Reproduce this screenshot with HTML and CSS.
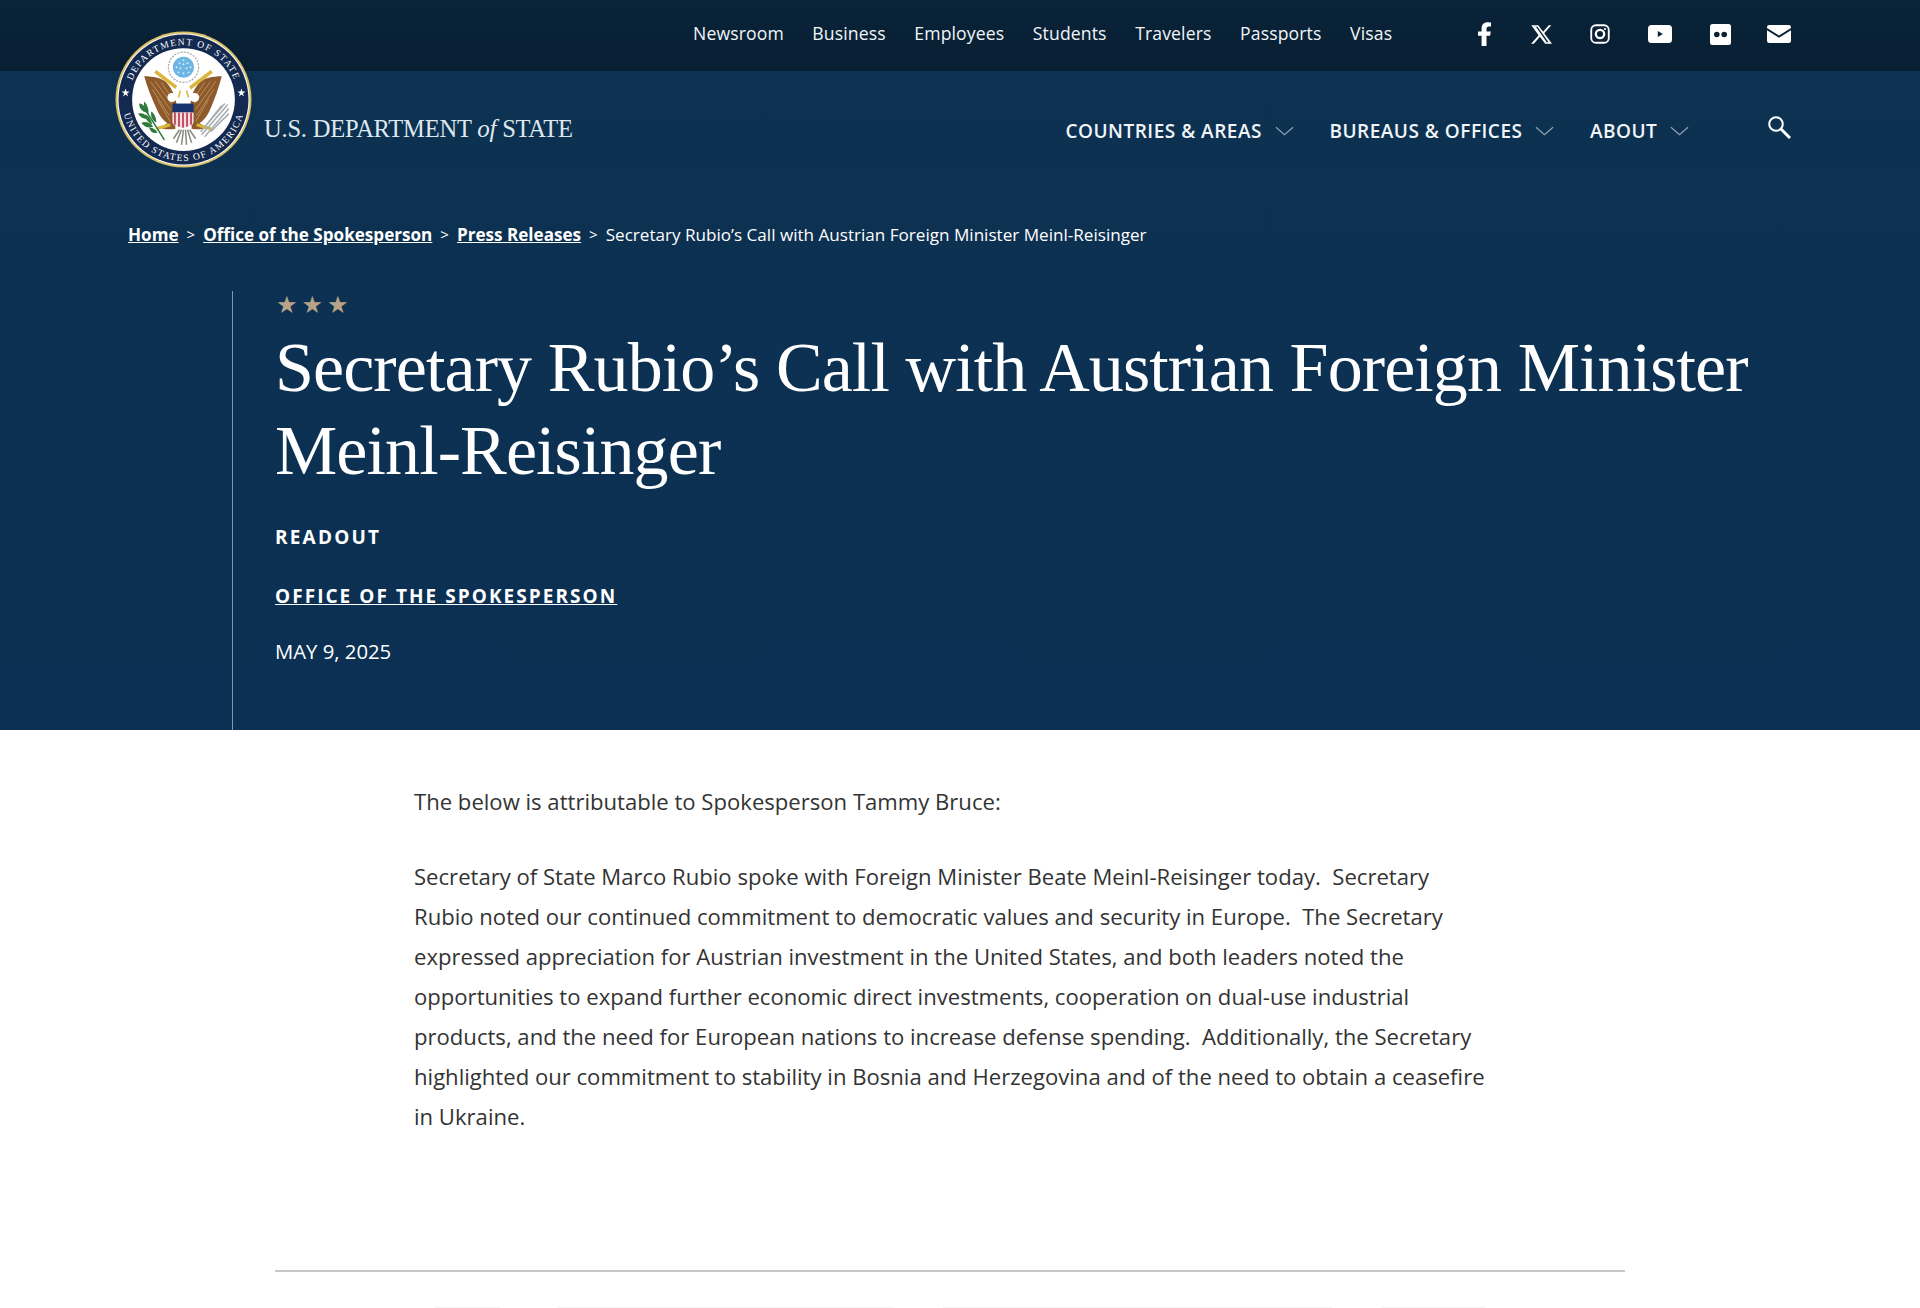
FILE: index.html
```html
<!DOCTYPE html>
<html lang="en">
<head>
<meta charset="utf-8">
<title>Secretary Rubio's Call with Austrian Foreign Minister Meinl-Reisinger</title>
<link rel="stylesheet" href="styles.css">
</head>
<body>
<header class="hero">
  <div class="topbar">
    <nav class="toplinks">
      <a>Newsroom</a><a>Business</a><a>Employees</a><a>Students</a><a>Travelers</a><a>Passports</a><a>Visas</a>
    </nav>
    <div class="socials">
      <svg class="si si-f" viewBox="0 0 14 24"><path d="M3.600 24V13.800H0V9.400h3.600V6.300C3.600 2.400 6 .2 9.500.2c1.700 0 3.500.3 3.500.3v3.900h-2c-1.900 0-2.500 1.200-2.500 2.400v2.600h4.300l-.7 4.400H8.500V24z"/></svg>
      <svg class="si si-x" viewBox="0 0 24 24"><path fill-rule="evenodd" d="M.3 1.300h8l5.500 7.500 6.500-7.500h2.900l-8.100 9.300 9.100 12.100h-8l-6-8.100-7 8.100H.1l8.600-9.900zM3.900 3.100l12.800 17.800h3.400L7.300 3.100z"/><path d="M5.600 3l12.400 17.900h-2.200L3.500 3z"/></svg>
      <svg class="si si-ig" viewBox="0 0 24 24"><rect x="1.500" y="1.500" width="21" height="21" rx="5.500" class="ig-line"/><circle cx="12" cy="12" r="5" class="ig-line ig-thick"/><circle cx="18" cy="6" r="1.300"/></svg>
      <svg class="si si-yt" viewBox="0 0 24 18"><path fill-rule="evenodd" d="M3.500 0h17A3.500 3.500 0 0 1 24 3.500v11a3.500 3.500 0 0 1-3.500 3.500h-17A3.500 3.500 0 0 1 0 14.500v-11A3.500 3.500 0 0 1 3.500 0zm6.300 6v6l5-3z"/></svg>
      <svg class="si si-fl" viewBox="0 0 21 21"><path fill-rule="evenodd" d="M2.500 0h16A2.500 2.500 0 0 1 21 2.500v16a2.500 2.500 0 0 1-2.500 2.500h-16A2.500 2.500 0 0 1 0 18.500v-16A2.500 2.500 0 0 1 2.500 0zM6.800 7.700a2.800 2.800 0 1 0 0 5.600 2.800 2.800 0 0 0 0-5.600zm7.400 0a2.800 2.800 0 1 0 0 5.600 2.800 2.800 0 0 0 0-5.600z"/></svg>
      <svg class="si si-ml" viewBox="0 0 24 18"><path d="M2.200 0h19.600A2.200 2.200 0 0 1 24 2.200v.8l-12 7.600L0 3v-.8A2.200 2.200 0 0 1 2.200 0zM0 5.200l12 7.600 12-7.600v10.600a2.200 2.200 0 0 1-2.200 2.200H2.200A2.200 2.200 0 0 1 0 15.800z"/></svg>
    </div>
  </div>
  <div class="mainbar">
    <div class="brand">
      <svg class="seal" viewBox="0 0 136 136">
        <defs>
          <path id="arcTop" d="M14 68 A54 54 0 0 1 122 68"/>
          <path id="arcBot" d="M7 68 A61 61 0 0 0 129 68"/>
        </defs>
        <circle cx="68" cy="68" r="67.500" class="s-gold"/>
        <circle cx="68" cy="68" r="65.500" class="s-white"/>
        <circle cx="68" cy="68" r="64.500" class="s-navy"/>
        <circle cx="68" cy="68" r="51" class="s-white"/>
        <text class="s-text s-text-top"><textPath href="#arcTop" startOffset="50%" text-anchor="middle">DEPARTMENT OF STATE</textPath></text>
        <text class="s-text s-text-bot"><textPath href="#arcBot" startOffset="50%" text-anchor="middle">UNITED STATES OF AMERICA</textPath></text>
        <polygon class="s-w" points="10.500,57 11.500,60 14.500,60 12,62 13,65 10.500,63 8,65 9,62 6.500,60 9.500,60"/>
        <polygon class="s-w" points="125.500,57 126.500,60 129.500,60 127,62 128,65 125.500,63 123,65 124,62 121.500,60 124.500,60"/>

        <circle cx="68" cy="36" r="15" class="s-cloud"/>
        <circle cx="68" cy="36" r="10.500" class="s-blue"/>
        <g class="s-dots"><circle cx="68" cy="29" r=".9"/><circle cx="64" cy="32" r=".9"/><circle cx="68" cy="33" r=".9"/><circle cx="72" cy="32" r=".9"/><circle cx="61" cy="36" r=".9"/><circle cx="65" cy="37" r=".9"/><circle cx="71" cy="37" r=".9"/><circle cx="75" cy="36" r=".9"/><circle cx="63" cy="41" r=".9"/><circle cx="73" cy="41" r=".9"/><circle cx="68" cy="42" r=".9"/></g>

        <path class="s-brown" d="M29 45 C38 45 47 47 51 51 C56 56 59 63 61 72 L60 95 C52 93 46 88 42 79 C37 68 32 56 29 45z"/>
        <path class="s-brown" d="M106 45 C97 45 88 47 84 51 C79 56 76 63 75 72 L76 95 C84 93 90 88 94 79 C99 68 103 56 106 45z"/>
        <path class="s-feather" d="M35 50 L55 78 M40 50 L57 73 M37 58 L54 84 M46 51 L58 69 M42 68 L55 90"/>
        <path class="s-feather" d="M100 50 L80 78 M95 50 L78 73 M98 58 L81 84 M89 51 L77 69 M93 68 L80 90"/>
        <path class="s-brown" d="M45 96 C50 92 54 90 59 90 L60 97 C55 98 50 98 45 96z M91 96 C86 92 82 90 77 90 L76 97 C81 98 86 98 91 96z"/>
        <path class="s-goldline" d="M40 40 L62 57 M96 40 L74 57"/>
        <path class="s-goldthin" d="M41 97 L55 93 M95 97 L81 93"/>
        <circle cx="56.500" cy="66" r="4.500" class="s-w"/>
        <circle cx="79" cy="66" r="4.500" class="s-w"/>
        <circle cx="67.500" cy="60" r="8" class="s-w"/>
        <path class="s-goldthin s-beak" d="M63 66 L65 59 M73 66 L71 59"/>
        <rect x="57" y="72" width="21" height="9" class="s-shield"/>
        <path class="s-stripes" d="M57 81h21v9c0 4-5 5-10.500 6-5.500-1-10.500-2-10.500-6z"/>
        <path class="s-stripe" d="M59.500 81v12M63.500 81v14M67.500 81v15M71.500 81v14M75.500 81v12"/>

        <g class="s-green">
          <path d="M24 72 C28 72 31 76 31 81 C27 80 24 77 24 72z"/>
          <path d="M29 70 C32 73 34 78 33 83 C30 80 28 75 29 70z"/>
          <path d="M23 82 C27 81 31 83 34 87 C29 88 25 86 23 82z"/>
          <path d="M30 83 C33 84 36 88 37 93 C33 91 30 88 30 83z"/>
          <path d="M26 91 C31 89 35 91 38 95 C33 97 29 95 26 91z"/>
          <path d="M36 80 C39 82 41 86 41 91 C37 89 35 85 36 80z"/>
          <path d="M34 96 C38 96 41 98 42 101 C38 102 35 100 34 96z"/>
        </g>
        <path class="s-greenline" d="M30 78 L42 97 L49 108"/>
        <path class="s-greyline" d="M112 73 L86 103 M109 72 L85 100 M113 77 L89 105 M106 74 L90 94 M113 82 L95 100"/>
        <path class="s-tail" d="M64 98 L58 107 M66 98 L61 111 M68 98 L66 113 M70 98 L71 113 M72 98 L76 111 M74 98 L80 107"/>
      </svg>
      <span class="wordmark">U.S. DEPARTMENT <i>of</i> STATE</span>
    </div>
    <nav class="mainnav">
      <a class="mn">COUNTRIES &amp; AREAS<svg class="chev" viewBox="0 0 20 10"><path d="M1 1l9 8 9-8"/></svg></a>
      <a class="mn">BUREAUS &amp; OFFICES<svg class="chev" viewBox="0 0 20 10"><path d="M1 1l9 8 9-8"/></svg></a>
      <a class="mn">ABOUT<svg class="chev" viewBox="0 0 20 10"><path d="M1 1l9 8 9-8"/></svg></a>
    </nav>
    <svg class="search" viewBox="0 0 24 24"><circle cx="9" cy="9" r="6.800"/><path class="search-h" d="M14 14l9 9"/></svg>
  </div>
  <div class="crumbs">
    <a>Home</a><span class="sep">&gt;</span><a>Office of the Spokesperson</a><span class="sep">&gt;</span><a>Press Releases</a><span class="sep">&gt;</span><span>Secretary Rubio’s Call with Austrian Foreign Minister Meinl-Reisinger</span>
  </div>
  <div class="titleblock">
    <div class="stars">★★★</div>
    <h1>Secretary Rubio’s Call with Austrian Foreign Minister Meinl-Reisinger</h1>
    <p class="kind">READOUT</p>
    <p class="office"><a>OFFICE OF THE SPOKESPERSON</a></p>
    <p class="date">MAY 9, 2025</p>
  </div>
</header>
<main class="article">
  <p>The below is attributable to Spokesperson Tammy Bruce:</p>
  <p>Secretary of State Marco Rubio spoke with Foreign Minister Beate Meinl-Reisinger today.&nbsp; Secretary Rubio noted our continued commitment to democratic values and security in Europe.&nbsp; The Secretary expressed appreciation for Austrian investment in the United States, and both leaders noted the opportunities to expand further economic direct investments, cooperation on dual-use industrial products, and the need for European nations to increase defense spending.&nbsp; Additionally, the Secretary highlighted our commitment to stability in Bosnia and Herzegovina and of the need to obtain a ceasefire in Ukraine.</p>
</main>
<div class="rule"></div>
<div class="nextrow"><span class="nr nr-1"></span><span class="nr nr-2"></span><span class="nr nr-3"></span><span class="nr nr-4"></span></div>
</body>
</html>
```
FILE: styles.css
```css
* { box-sizing: border-box; }
html, body { margin: 0; padding: 0; }
body { height: 1308px; overflow: hidden; background: #fff; font-family: "Open Sans", "Noto Sans", sans-serif; color: #333; }
a { color: inherit; }

.hero { height: 730px; background: linear-gradient(180deg, #0d3150 0%, #0b3053 100%); color: #fff; }

.topbar { height: 71px; background: linear-gradient(180deg, #0a2338 0%, #081f33 100%); display: flex; align-items: center; padding-left: 693px; }
.toplinks { display: flex; gap: 28.500px; font-size: 17.600px; letter-spacing: .13px; width: 777px; padding-bottom: 5px; }
.toplinks a { color: #f1f5f8; }
.socials { display: flex; align-items: center; gap: 38px; padding: 0 0 3px 8px; }
.si { fill: #fff; flex: none; display: block; }
.si-f { width: 14px; height: 24px; margin-right: 1px; }
.si-x { width: 21px; height: 21px; }
.si-ig { width: 20px; height: 20px; }
.ig-line { fill: none; stroke: #fff; stroke-width: 2.200; }
.ig-thick { stroke-width: 2.800; }
.si-yt { width: 24px; height: 18px; }
.si-fl { width: 21px; height: 21px; }
.si-ml { width: 24px; height: 18px; margin-left: -2px; }

.mainbar { height: 125px; padding-left: 114.500px; display: flex; align-items: flex-start; }
.brand { display: flex; align-items: flex-start; width: 951px; flex: none; }
.seal { width: 137px; height: 137px; margin-top: -40.500px; flex: none; }
.wordmark { font-family: "Liberation Serif", serif; font-size: 24.500px; color: #dfe8ee; margin: 44px 0 0 12.500px; white-space: nowrap; letter-spacing: -.2px; }
.wordmark i { font-size: 25px; }

.s-gold { fill: #d8c069; }
.s-white { fill: #fff; }
.s-navy { fill: #13294f; }
.s-text { font-family: "Liberation Serif", serif; font-size: 9.500px; fill: #fff; }
.s-text-top { letter-spacing: 1.300px; }
.s-text-bot { letter-spacing: 1.300px; }
.s-w { fill: #fff; }
.s-cloud { fill: #fff; stroke: #a8a8a8; stroke-width: 1.200; stroke-dasharray: 2 1.200; }
.s-blue { fill: #6db5e3; }
.s-dots { fill: #dcefff; }
.s-brown { fill: #8d5a2b; }
.s-feather { stroke: #c69a63; stroke-width: .8; fill: none; }
.s-goldline { stroke: #d9b53a; stroke-width: 3.500; fill: none; }
.s-goldthin { stroke: #d9b53a; stroke-width: 3; fill: none; }
.s-beak { stroke-width: 1.500; }
.s-shield { fill: #16356f; }
.s-stripes { fill: #f6dfe0; }
.s-stripe { stroke: #c0455b; stroke-width: 1.800; fill: none; }
.s-green { fill: #2d7a3b; }
.s-greenline { stroke: #2d7a3b; stroke-width: 1.500; fill: none; }
.s-greyline { stroke: #a7adb0; stroke-width: 1.500; fill: none; }
.s-tail { stroke: #8a8a80; stroke-width: 1.500; fill: none; }

.mainnav { margin-top: 47px; display: flex; gap: 35.500px; font-weight: 600; font-size: 19px; letter-spacing: .5px; color: #f1f5f8; }
.mn { display: flex; align-items: center; white-space: nowrap; }
.chev { width: 19px; height: 10px; margin-left: 13px; flex: none; fill: none; stroke: #8fa3b5; stroke-width: 1.200; }
.search { position: absolute; left: 1767px; top: 115px; width: 24px; height: 24px; fill: none; stroke: #fff; stroke-width: 2; }
.search-h { stroke-width: 3; }

.crumbs { padding: 27px 0 0 128px; height: 95px; font-size: 17.100px; color: #fff; display: flex; align-items: flex-start; white-space: nowrap; line-height: 23px; }
.crumbs a { font-weight: 700; text-decoration: underline; }
.crumbs .sep { margin: 0 8px; font-size: 15px; }

.titleblock { margin-left: 232px; border-left: 1px solid #8298ab; padding-left: 42px; height: 439px; }
.stars { color: #b8a388; font-size: 24px; letter-spacing: 4px; line-height: 28px; font-family: "DejaVu Sans", sans-serif; padding-left: 1px; }
h1 { margin: 7px 0 0; font-family: "Liberation Serif", serif; font-weight: 400; font-size: 70px; line-height: 83px; letter-spacing: -.9px; color: #fff; width: 1500px; }
.kind { margin: 32px 0 0; font-size: 19px; font-weight: 700; letter-spacing: 2.200px; line-height: 26px; }
.office { margin: 33px 0 0; font-size: 19px; font-weight: 700; letter-spacing: 2.050px; line-height: 26px; }
.office a { text-decoration: underline; }
.date { margin: 29px 0 0; font-size: 20.300px; line-height: 26px; }

.article { margin-left: 414px; width: 1080px; height: 540px; padding-top: 51px; font-size: 22.100px; line-height: 40px; color: #333; }
.article p { margin: 0 0 35px; }
.rule { margin-left: 275px; width: 1350px; height: 2px; background: #c8c8c8; }

.nextrow { margin: 35px 0 0 435px; display: flex; height: 1px; }
.nr { display: block; height: 1px; background: #f6f6f6; }
.nr-1 { width: 65px; }
.nr-2 { width: 337px; margin-left: 57px; }
.nr-3 { width: 389px; margin-left: 49px; }
.nr-4 { width: 104px; margin-left: 49px; }
```
